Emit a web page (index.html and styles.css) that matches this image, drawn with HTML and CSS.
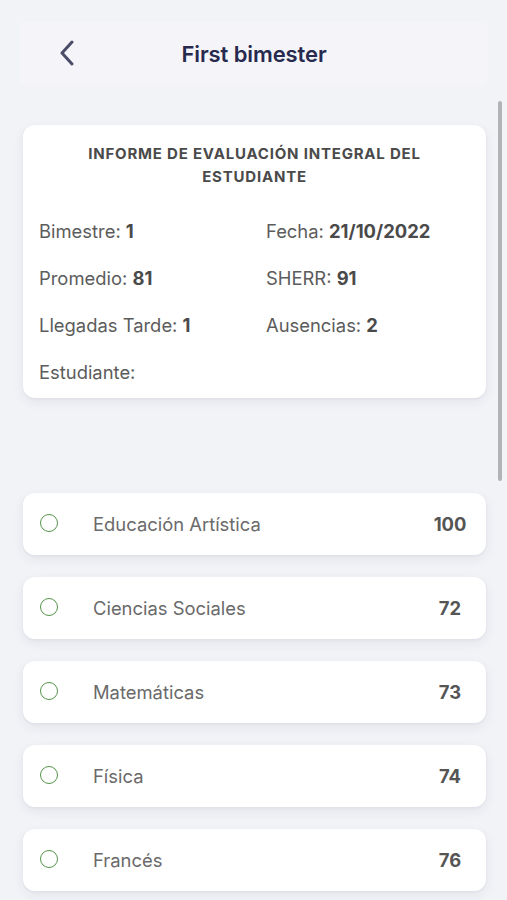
FILE: index.html
```html
<!DOCTYPE html>
<html lang="es">
<head>
<meta charset="utf-8">
<link rel="stylesheet" href="styles.css">
<title>First bimester</title>
</head>
<body>
<div class="screen">
  <header class="topbar">
    <button class="back" aria-label="Back">
      <svg width="16" height="26" viewBox="0 0 16 26"><path d="M13 2 L3 13 L13 24" fill="none" stroke="#4a4c68" stroke-width="3" stroke-linecap="round" stroke-linejoin="round"/></svg>
    </button>
    <h1 class="title">First bimester</h1>
  </header>

  <section class="card report">
    <h2 class="report-title">INFORME DE EVALUACIÓN INTEGRAL DEL ESTUDIANTE</h2>
    <div class="facts">
      <div>Bimestre: <b>1</b></div>
      <div>Fecha: <b>21/10/2022</b></div>
      <div>Promedio: <b>81</b></div>
      <div>SHERR: <b>91</b></div>
      <div>Llegadas Tarde: <b>1</b></div>
      <div>Ausencias: <b>2</b></div>
      <div>Estudiante:</div>
    </div>
  </section>

  <ul class="subjects">
    <li class="card subject"><span class="dot"></span><span class="name">Educación Artística</span><span class="grade">100</span></li>
    <li class="card subject"><span class="dot"></span><span class="name">Ciencias Sociales</span><span class="grade">72</span></li>
    <li class="card subject"><span class="dot"></span><span class="name">Matemáticas</span><span class="grade">73</span></li>
    <li class="card subject"><span class="dot"></span><span class="name">Física</span><span class="grade">74</span></li>
    <li class="card subject"><span class="dot"></span><span class="name">Francés</span><span class="grade">76</span></li>
  </ul>

  <div class="scrollbar"></div>
</div>
</body>
</html>
```

FILE: styles.css
```css
* { box-sizing: border-box; }

html, body {
  margin: 0;
  padding: 0;
}

body {
  background: #f2f3f7;
  font-family: Inter, "Noto Sans", "Liberation Sans", sans-serif;
  color: #5a5a5a;
  width: 507px;
  height: 900px;
  overflow: hidden;
}

.screen {
  position: relative;
  padding: 22px 21px 0 23px;
}

.topbar {
  height: 63px;
  margin: 0 -2px 0 -3px;
  background: #f5f5f9;
  border-radius: 6px;
  display: flex;
  align-items: center;
  justify-content: center;
  position: relative;
}

.back {
  position: absolute;
  left: 39px;
  top: 18px;
  border: 0;
  background: none;
  padding: 0;
  width: 16px;
  height: 26px;
  display: flex;
}

.title {
  margin: 0;
  font-size: 22px;
  font-weight: 600;
  color: #272a4e;
  letter-spacing: -0.1px;
}

.card {
  background: #ffffff;
  border-radius: 12px;
  box-shadow: 0 4px 12px rgba(40, 45, 70, 0.07), 0 1px 3px rgba(40, 45, 70, 0.05);
}

.report {
  margin-top: 40px;
  padding: 17px 16px 16px;
  height: 273px;
}

.report-title {
  margin: 0 auto;
  width: 400px;
  text-align: center;
  font-size: 15px;
  line-height: 23px;
  font-weight: 700;
  letter-spacing: 0.8px;
  color: #4a4a4a;
}

.facts {
  margin-top: 31px;
  display: grid;
  grid-template-columns: 227px 1fr;
  row-gap: 23px;
  font-size: 18.4px;
  line-height: 24px;
  color: #5c5c5c;
}

.facts b {
  font-weight: 700;
  color: #4a4a4a;
}

.subjects {
  list-style: none;
  margin: 95px 0 0;
  padding: 0;
  display: flex;
  flex-direction: column;
  gap: 22px;
}

.subject {
  height: 62px;
  display: flex;
  align-items: center;
  padding: 0 10px 0 17px;
}

.dot {
  width: 18px;
  height: 18px;
  border: 1.7px solid #56944b;
  border-radius: 50%;
  flex: none;
  margin-top: -3px;
}

.name {
  margin-left: 35px;
  flex: 1;
  font-size: 18.4px;
  color: #6a6a6a;
}

.grade {
  width: 52px;
  text-align: center;
  font-size: 18.4px;
  font-weight: 700;
  color: #555555;
}

.scrollbar {
  position: absolute;
  right: 5px;
  top: 101px;
  width: 4px;
  height: 380px;
  border-radius: 2px;
  background: #b3b3b7;
}
```
